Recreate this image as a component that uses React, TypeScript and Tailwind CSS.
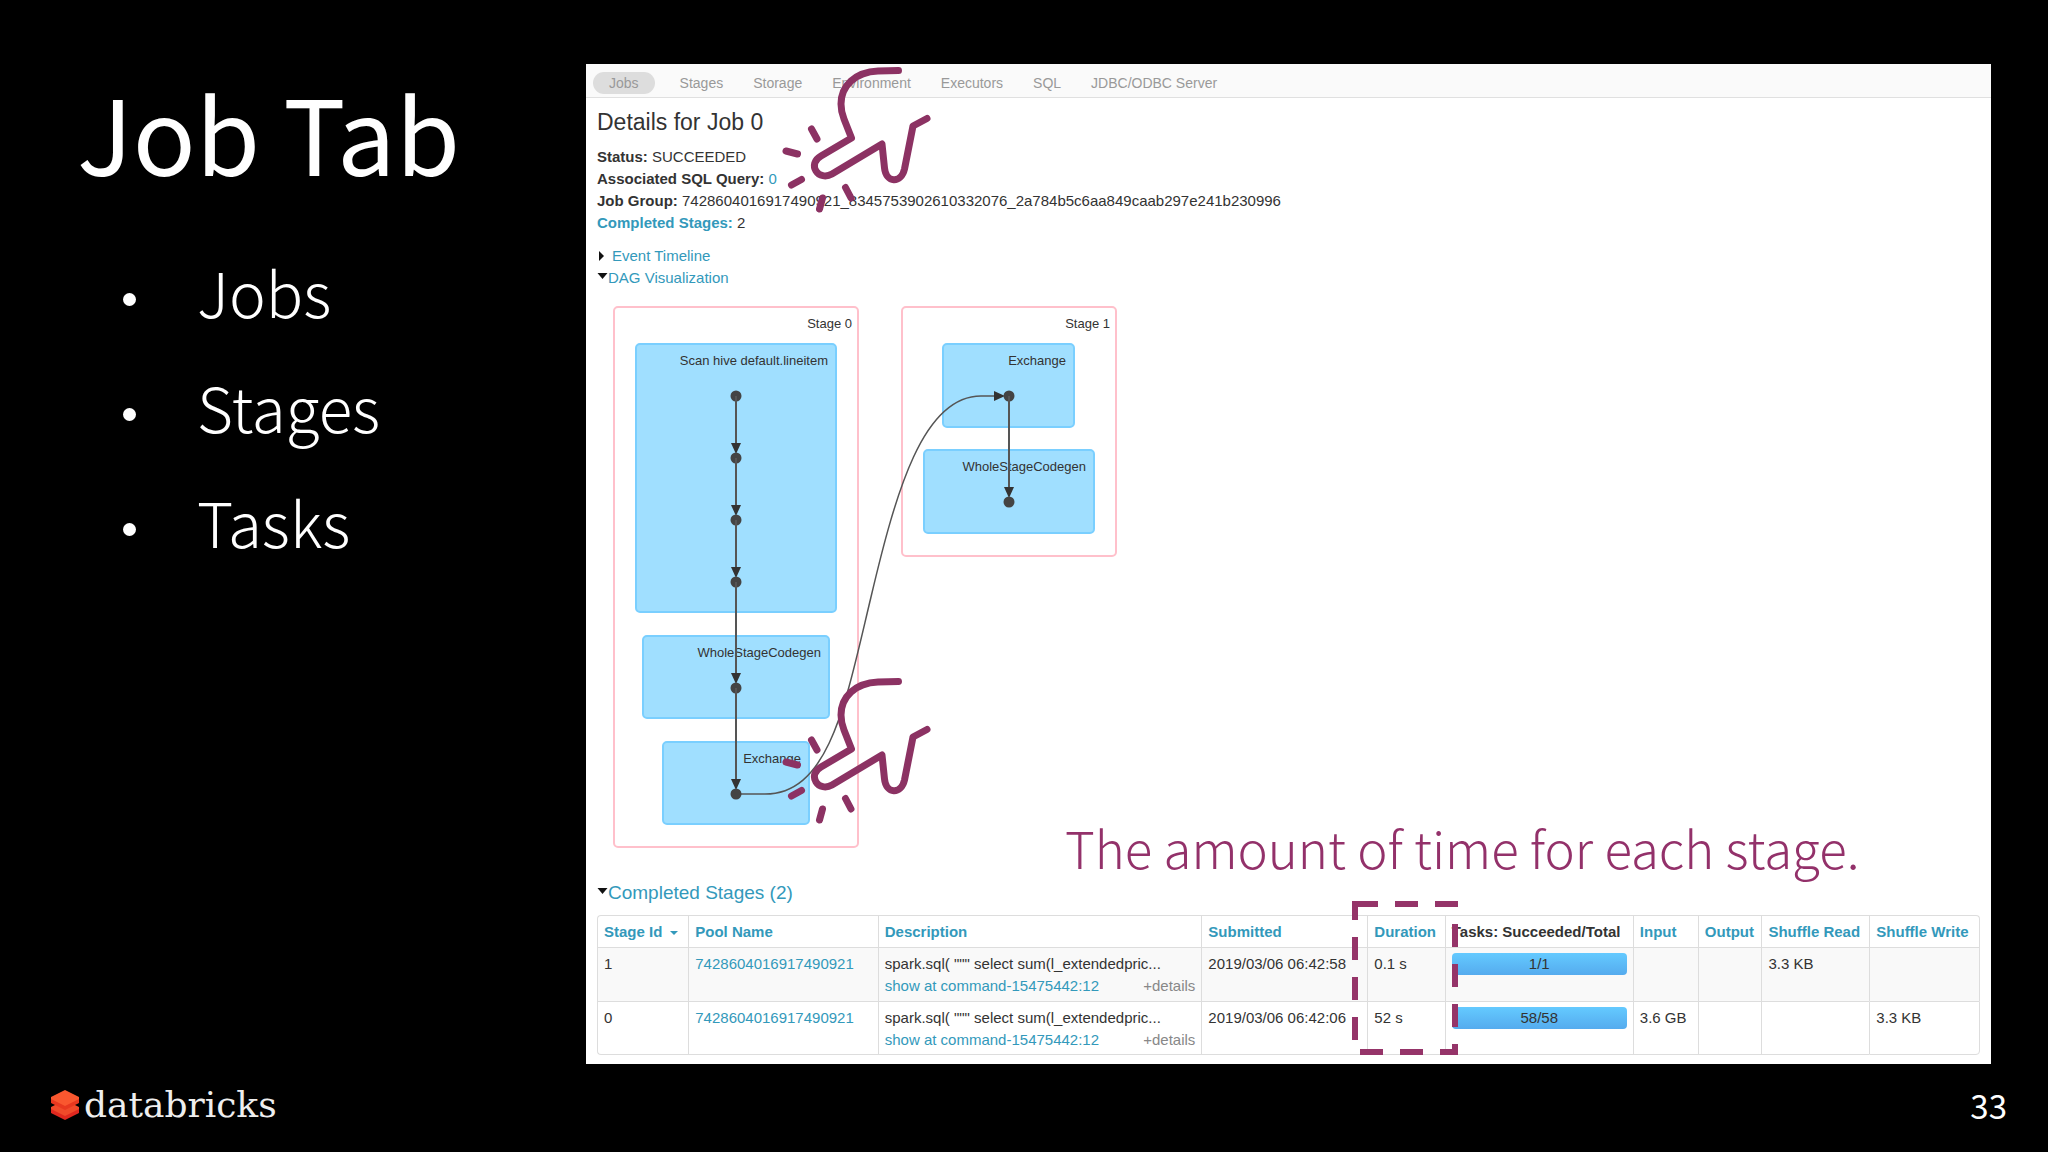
import type { ReactNode } from "react";

const SLIDE_FONT = "font-['Noto_Sans_CJK_SC','Noto_Sans',sans-serif]";
const UI_FONT = "font-['Liberation_Sans',Arial,sans-serif]";

const tabs = ["Stages", "Storage", "Environment", "Executors", "SQL", "JDBC/ODBC Server"];

const stages = [
  { id: "1", submitted: "2019/03/06 06:42:58", duration: "0.1 s", tasks: "1/1", input: "", read: "3.3 KB", write: "" },
  { id: "0", submitted: "2019/03/06 06:42:06", duration: "52 s", tasks: "58/58", input: "3.6 GB", read: "", write: "3.3 KB" },
];

function Hand({ className }: { className: string }) {
  return (
    <svg
      className={`pointer-events-none absolute h-[160px] w-[160px] ${className}`}
      viewBox="0 0 160 160"
      fill="none"
      stroke="#8c3263"
      strokeWidth="7"
      strokeLinecap="round"
      strokeLinejoin="round"
      aria-hidden="true"
    >
      <path d="M118.500 10.500L98 11C75 12 61 26 61 44C61 49 62 54 64 59L71.500 78L41 96C34 100 33 106 36 111C39 116 46 117.500 52 114L102 84L104.500 108C106 123 121 124 124.500 109L133 66L147 58.500" />
      <path d="M31.500 69L37 79M6 91L17.500 94M11.500 125L21.500 119.500M42.500 138L39.500 149M65.500 127.500L71 138" />
    </svg>
  );
}

function Caret({ open }: { open?: boolean }) {
  return open ? (
    <svg className="mb-1 h-[7px] w-[11px] shrink-0" viewBox="0 0 11 7" aria-hidden="true">
      <path d="M0.500 0H10.500L5.500 6Z" fill="#111" />
    </svg>
  ) : (
    <svg className="mr-2 h-[10px] w-[7px] shrink-0" viewBox="0 0 7 10" aria-hidden="true">
      <path d="M2 0L7 5L2 10Z" fill="#111" />
    </svg>
  );
}

type Box = { x: number; y: number; w: number; h: number; label: string };

const clusters: Box[] = [
  { x: 17, y: 10, w: 244, h: 540, label: "Stage 0" },
  { x: 305, y: 10, w: 214, h: 249, label: "Stage 1" },
];
const operations: Box[] = [
  { x: 39, y: 47, w: 200, h: 268, label: "Scan hive default.lineitem" },
  { x: 46, y: 339, w: 186, h: 82, label: "WholeStageCodegen" },
  { x: 66, y: 445, w: 146, h: 82, label: "Exchange" },
  { x: 346, y: 47, w: 131, h: 83, label: "Exchange" },
  { x: 327, y: 153, w: 170, h: 83, label: "WholeStageCodegen" },
];
const chains = [
  { x: 139, ys: [99, 161, 223, 285, 391, 497] },
  { x: 412, ys: [99, 205] },
];

function Dag() {
  return (
    <svg className={`block h-[554px] w-[560px] ${UI_FONT}`} viewBox="0 0 560 554" role="img" aria-label="DAG Visualization">
      {clusters.map((b) => (
        <g key={b.label}>
          <rect x={b.x} y={b.y} width={b.w} height={b.h} rx="4" fill="#fff" stroke="#ffc0cb" strokeWidth="2" />
          <text x={b.x + b.w - 6} y={b.y + 21} textAnchor="end" fontSize="13" fill="#333">
            {b.label}
          </text>
        </g>
      ))}
      {operations.map((b, i) => (
        <g key={i}>
          <rect x={b.x} y={b.y} width={b.w} height={b.h} rx="4" fill="#a0dfff" stroke="#7acfff" strokeWidth="2" />
          <text x={b.x + b.w - 8} y={b.y + 21} textAnchor="end" fontSize="13" fill="#333">
            {b.label}
          </text>
        </g>
      ))}
      <path d="M139 497H168C233 497 249 404 274 300C299 194 326 99 384 99H404" fill="none" stroke="#555" strokeWidth="1.500" />
      <path d="M397 94L408 99L397 104Z" fill="#333" />
      {chains.map((c) =>
        c.ys.map((y, i) => (
          <g key={`${c.x}-${y}`} fill="#444">
            {i > 0 && (
              <>
                <path d={`M${c.x} ${c.ys[i - 1]}V${y - 10}`} stroke="#555" strokeWidth="2" />
                <path d={`M${c.x - 5} ${y - 15}H${c.x + 5}L${c.x} ${y - 4}Z`} fill="#333" />
              </>
            )}
            <circle cx={c.x} cy={y} r="5.500" />
          </g>
        )),
      )}
    </svg>
  );
}

function Th({ children, plain }: { children: ReactNode; plain?: boolean }) {
  return (
    <th
      scope="col"
      className={`relative h-8 border-t border-l border-[#dddddd] px-[6px] text-left font-bold whitespace-nowrap first:rounded-tl last:rounded-tr last:border-r ${plain ? "text-[#333333]" : "text-[#3399bb]"}`}
    >
      {children}
    </th>
  );
}

function Td({ children }: { children?: ReactNode }) {
  return (
    <td className="h-[54px] border-t border-l border-[#dddddd] px-[6px] pt-[5px] align-top whitespace-nowrap last:border-r group-last:border-b group-last:first:rounded-bl group-last:last:rounded-br">
      {children}
    </td>
  );
}

function StageTable() {
  return (
    <table className="w-full table-fixed border-separate border-spacing-0 text-[15px] leading-[22px] text-[#333333]">
      <colgroup>
        <col className="w-[6.6%]" />
        <col className="w-[13.7%]" />
        <col className="w-[23.400%]" />
        <col className="w-[12%]" />
        <col className="w-[5.6%]" />
        <col className="w-[13.600%]" />
        <col className="w-[4.7%]" />
        <col className="w-[4.6%]" />
        <col className="w-[7.8%]" />
        <col className="w-[8%]" />
      </colgroup>
      <thead>
        <tr>
          <Th>
            Stage Id
            <svg className="ml-2 inline-block h-1 w-2 align-middle" viewBox="0 0 8 4" aria-hidden="true">
              <path d="M0 0H8L4 4Z" fill="#3399bb" />
            </svg>
          </Th>
          <Th>Pool Name</Th>
          <Th>Description</Th>
          <Th>Submitted</Th>
          <Th>
            Duration
            <svg
              className="pointer-events-none absolute -top-[15px] -left-[16px] z-10 h-[154px] w-[106px]"
              viewBox="0 0 106 154"
              aria-hidden="true"
            >
              <rect x="3" y="3" width="100" height="148" fill="none" stroke="#953469" strokeWidth="6" strokeDasharray="23 17" />
            </svg>
          </Th>
          <Th plain>Tasks: Succeeded/Total</Th>
          <Th>Input</Th>
          <Th>Output</Th>
          <Th>Shuffle Read</Th>
          <Th>Shuffle Write</Th>
        </tr>
      </thead>
      <tbody>
        {stages.map((s) => (
          <tr key={s.id} className="group odd:bg-[#f9f9f9]">
            <Td>{s.id}</Td>
            <Td>
              <a href="#pool" className="text-[#3399bb]">7428604016917490921</a>
            </Td>
            <Td>
              <div>spark.sql( """ select sum(l_extendedpric...</div>
              <div className="flex justify-between">
                <a href="#stage" className="text-[#3399bb]">show at command-15475442:12</a>
                <button type="button" className="text-[#888888]">+details</button>
              </div>
            </Td>
            <Td>{s.submitted}</Td>
            <Td>{s.duration}</Td>
            <Td>
              <div className="h-[22px] rounded bg-linear-to-b from-[#64caff] to-[#55abee] text-center">{s.tasks}</div>
            </Td>
            <Td>{s.input}</Td>
            <Td />
            <Td>{s.read}</Td>
            <Td>{s.write}</Td>
          </tr>
        ))}
      </tbody>
    </table>
  );
}

export default function App() {
  return (
    <div className={`flex min-h-screen flex-col bg-black text-white ${SLIDE_FONT}`}>
      <main className="flex pt-16 pr-[57px]">
        <aside className="w-[586px] shrink-0 pl-[77px]">
          <h1 className="text-[104px] leading-[134px]">Job Tab</h1>
          <ul className="mt-9 pl-[46px] text-[62px] leading-[115px] font-light">
            {["Jobs", "Stages", "Tasks"].map((item) => (
              <li key={item} className="flex items-center">
                <span className="mt-4 mr-[61px] h-[13px] w-[13px] rounded-full bg-white" />
                {item}
              </li>
            ))}
          </ul>
        </aside>

        <section className={`relative min-w-0 flex-1 bg-white text-[15px] leading-[22px] text-[#333333] ${UI_FONT}`}>
          <nav className="flex h-[34px] items-center border-b border-[#e0e0e0] bg-[#fafafa] pt-1 pl-[7px] text-[14px] text-[#999999]">
            <a href="#jobs" className="mr-[10px] rounded-full bg-[#dddddd] px-4">Jobs</a>
            {tabs.map((t) => (
              <a key={t} href={`#${t}`} className="px-[15px]">{t}</a>
            ))}
          </nav>

          <div className="px-[11px] pb-[9px]">
            <h2 className="pt-[10px] text-[23px] leading-[28px]">Details for Job 0</h2>
            <ul className="mt-[10px]">
              <li><strong>Status:</strong> SUCCEEDED</li>
              <li><strong>Associated SQL Query:</strong> <a href="#sql" className="text-[#3399bb]">0</a></li>
              <li><strong>Job Group:</strong> 7428604016917490921_8345753902610332076_2a784b5c6aa849caab297e241b230996</li>
              <li><a href="#completed" className="font-bold text-[#3399bb]">Completed Stages:</a> 2</li>
            </ul>
            <button type="button" className="mt-[11px] flex items-center text-[#3399bb]">
              <Caret />
              Event Timeline
            </button>
            <button type="button" className="flex items-center text-[#3399bb]">
              <Caret open />
              DAG Visualization
            </button>
            <div className="mt-[8px]">
              <Dag />
            </div>
            <h3 id="completed" className="mt-[28px] flex items-center text-[19px] leading-[28px] text-[#3399bb]">
              <Caret open />
              Completed Stages (2)
            </h3>
            <div className="mt-2">
              <StageTable />
            </div>
          </div>

          <Hand className="-top-1 left-[194px]" />
          <Hand className="top-[607px] left-[194px]" />
          <p className={`absolute top-[747px] left-[479px] text-[51px] leading-[72px] font-light whitespace-nowrap text-[#93316a] ${SLIDE_FONT}`}>
            The amount of time for each stage.
          </p>
        </section>
      </main>

      <footer className="flex flex-1 items-center justify-between pr-[41px] pb-[7px] pl-[50px]">
        <div className="flex items-center gap-1">
          <svg className="h-[30px] w-[30px]" viewBox="0 0 30 30" aria-hidden="true">
            <path d="M1 17V23L15 30L29 23V17L15 24Z" fill="#e0281f" />
            <path d="M1 17L7 14L15 18L23 14L29 17V19L15 26L1 19Z" fill="#f04a2a" />
            <path d="M1 8V13L15 20L29 13V8L15 15Z" fill="#e8381f" />
            <path d="M15 0L29 7V9L15 16L1 9V7Z" fill="#f9572f" />
          </svg>
          <span className="font-['DejaVu_Serif',serif] text-[36px] leading-[40px] text-[#eeeeee]">databricks</span>
        </div>
        <span className="text-[33px] leading-[40px]">33</span>
      </footer>
    </div>
  );
}
